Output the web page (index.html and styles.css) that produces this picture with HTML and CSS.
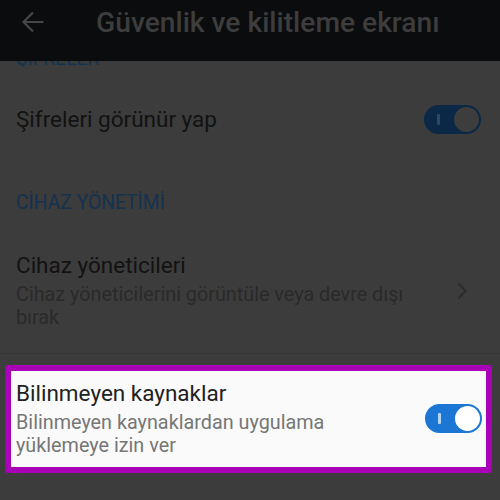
FILE: index.html
```html
<!DOCTYPE html>
<html lang="tr">
<head>
<meta charset="utf-8">
<title>Güvenlik ve kilitleme ekranı</title>
<link rel="stylesheet" href="styles.css">
</head>
<body>
<div class="screen">
  <header class="appbar">
    <svg class="back" viewBox="0 0 22 22" width="22" height="22" aria-hidden="true">
      <path d="M21.5 11H2M11 1.5 1.5 11 11 20.5" fill="none" stroke="currentColor" stroke-width="2.2"/>
    </svg>
    <h1 class="title">Güvenlik ve kilitleme ekranı</h1>
  </header>

  <div class="clip-header"><span class="section-label">ŞİFRELER</span></div>

  <div class="row row-single">
    <div class="text"><div class="row-title">Şifreleri görünür yap</div></div>
    <div class="trail"><span class="toggle toggle-dim"><span class="mark"></span><span class="knob"></span></span></div>
  </div>

  <div class="section"><span class="section-label">CİHAZ YÖNETİMİ</span></div>

  <div class="row row-double">
    <div class="text">
      <div class="row-title">Cihaz yöneticileri</div>
      <div class="row-sub">Cihaz yöneticilerini görüntüle veya devre dışı bırak</div>
    </div>
    <div class="trail trail-chevron">
      <svg class="chevron" viewBox="0 0 10 18" width="10" height="18" aria-hidden="true">
        <path d="M1.5 1.5 8.5 9 1.5 16.5" fill="none" stroke="currentColor" stroke-width="2"/>
      </svg>
    </div>
  </div>

  <div class="divider"></div>

  <div class="highlight">
    <div class="row row-hl">
      <div class="text">
        <div class="row-title">Bilinmeyen kaynaklar</div>
        <div class="row-sub">Bilinmeyen kaynaklardan uygulama yüklemeye izin ver</div>
      </div>
      <div class="trail"><span class="toggle toggle-on"><span class="mark"></span><span class="knob"></span></span></div>
    </div>
  </div>
</div>
</body>
</html>
```

FILE: styles.css
```css
html, body {
  margin: 0;
  padding: 0;
}

body {
  width: 500px;
  height: 500px;
  overflow: hidden;
  background: #3c3c3c;
  font-family: Roboto, "Noto Sans", "Liberation Sans", sans-serif;
}

.screen {
  display: flex;
  flex-direction: column;
  width: 500px;
  height: 500px;
}

.appbar {
  height: 61px;
  flex: none;
  box-sizing: border-box;
  display: flex;
  align-items: flex-start;
  background: #0b0c0e;
  padding: 0 0 0 22px;
}

.back {
  color: #474747;
  margin-top: 11px;
  flex: none;
}

.title {
  margin: 0 0 0 52px;
  height: 45px;
  line-height: 45px;
  font-size: 28.2px;
  font-weight: 500;
  color: #3d3d3d;
  white-space: nowrap;
}

.clip-header {
  height: 6px;
  overflow: hidden;
  display: flex;
  align-items: flex-end;
  padding-left: 16px;
  flex: none;
}

.clip-header .section-label {
  line-height: 20px;
  margin-bottom: -2px;
}

.section-label {
  font-size: 19.3px;
  color: #15324f;
}

.row {
  display: flex;
  align-items: center;
  padding: 0 19px 0 16px;
  flex: none;
}

.text {
  flex: 1;
  min-width: 0;
  padding-right: 12px;
}

.row-title {
  font-size: 22.5px;
  line-height: 27px;
  color: #121212;
  margin-bottom: 4px;
}

.row-single .row-title {
  margin-bottom: 0;
}

.row-sub {
  font-size: 19.8px;
  line-height: 23px;
  color: #2a2a2a;
}

.row-single {
  height: 105px;
}

.section {
  height: 58px;
  box-sizing: border-box;
  padding: 19px 16px 0;
  line-height: 24px;
  flex: none;
}

.row-double {
  height: 123px;
  box-sizing: border-box;
  padding-bottom: 2px;
}

.trail {
  width: 57px;
  flex: none;
  display: flex;
  justify-content: flex-end;
}

.trail-chevron {
  padding-right: 14px;
  box-sizing: border-box;
}

.chevron {
  color: #2c2c2c;
}

.divider {
  height: 1px;
  background: #363636;
  flex: none;
}

.highlight {
  margin: 11px 8px 0 5px;
  border: 6px solid #a800b6;
  border-radius: 3px;
  background: #fafafa;
  flex: none;
}

.row-hl {
  height: 96px;
  box-sizing: border-box;
  padding: 0 4px 2px 5px;
}

.row-hl .row-title {
  color: #212121;
}

.row-hl .row-sub {
  color: #767676;
}

.toggle {
  width: 57px;
  height: 29px;
  border-radius: 15px;
  box-sizing: border-box;
  display: flex;
  align-items: center;
  justify-content: space-between;
  padding: 0 2px 0 13px;
}

.mark {
  width: 3px;
  height: 11px;
  border-radius: 1px;
}

.knob {
  width: 25px;
  height: 25px;
  border-radius: 50%;
}

.toggle-on {
  background: #1b77d3;
}

.toggle-on .mark {
  background: #b7d5f3;
}

.toggle-on .knob {
  background: #ffffff;
}

.toggle-dim {
  background: #0b2947;
}

.toggle-dim .mark {
  background: #2c4866;
}

.toggle-dim .knob {
  background: #3d3d3d;
}
```
